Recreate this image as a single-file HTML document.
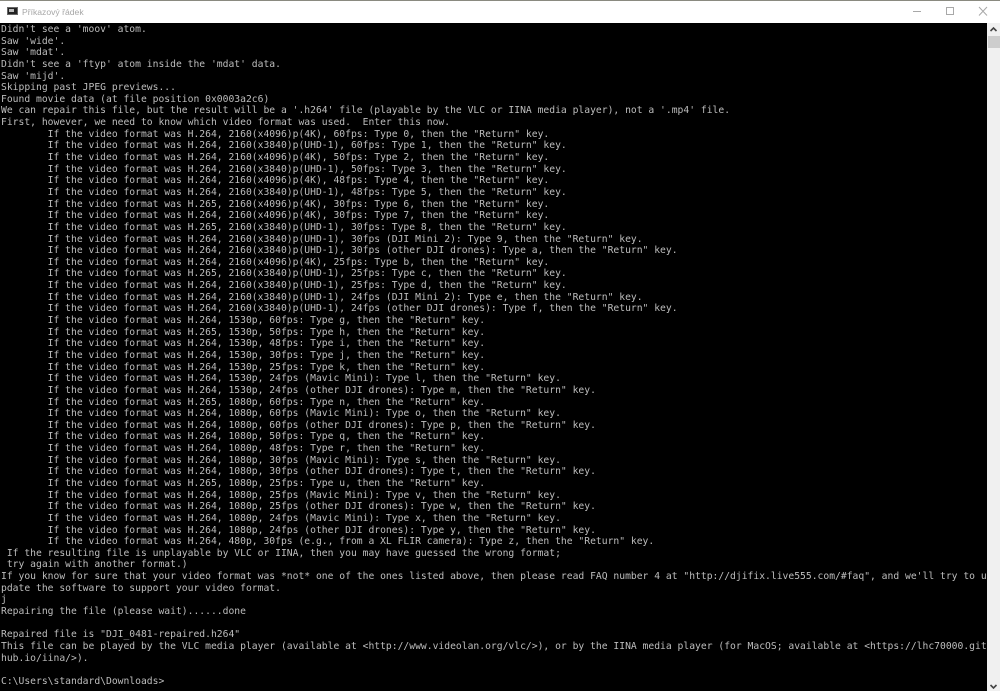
<!DOCTYPE html>
<html lang="cs"><head><meta charset="utf-8"><title>Příkazový řádek</title>
<style>
html,body{margin:0;padding:0;background:#fff}
body{width:1000px;height:691px;position:relative;overflow:hidden;font-family:"Liberation Sans",sans-serif}
#strip{position:absolute;left:0;top:0;width:1000px;height:1px;background:#8a8a80}
#bar{position:absolute;left:0;top:1px;width:1000px;height:22px;background:#fff}
#ico{position:absolute;left:7px;top:7px;width:11px;height:8px;background:#222;border:1px solid #666;box-sizing:border-box}
#ico:after{content:"";position:absolute;left:1px;top:1px;width:5px;height:3px;background:#bbb}
#ttl{position:absolute;left:22px;top:6px;font-size:8.6px;line-height:12px;color:#a6a6a6}
#con{position:absolute;left:0;top:23px;width:987px;height:668px;background:#000;overflow:hidden}
#txt{position:absolute;left:1px;top:1px;margin:0;font-family:"DejaVu Sans Mono",monospace;font-size:9.705px;line-height:11.64px;color:#bdbdbd;white-space:pre;filter:blur(.3px)}
#sb{position:absolute;left:987px;top:23px;width:13px;height:668px;background:#f0f0f0}
#th{position:absolute;left:988px;top:36px;width:12px;height:12px;background:#cdcdcd}
svg{position:absolute}
</style></head><body>
<div id="strip"></div>
<div id="bar"></div>
<div id="ico"></div>
<div id="ttl">Příkazový řádek</div>
<svg style="left:910px;top:4px" width="90" height="16" viewBox="0 0 90 16" fill="none" stroke="#a8a8a8" stroke-width="1">
<path d="M3 7.5H11"/><rect x="36.5" y="3.5" width="7" height="7"/><path d="M69 3L77 11.5M77 3L69 11.5"/>
</svg>
<div id="con"><pre id="txt">Didn't see a 'moov' atom.
Saw 'wide'.
Saw 'mdat'.
Didn't see a 'ftyp' atom inside the 'mdat' data.
Saw 'mijd'.
Skipping past JPEG previews...
Found movie data (at file position 0x0003a2c6)
We can repair this file, but the result will be a '.h264' file (playable by the VLC or IINA media player), not a '.mp4' file.
First, however, we need to know which video format was used.  Enter this now.
        If the video format was H.264, 2160(x4096)p(4K), 60fps: Type 0, then the "Return" key.
        If the video format was H.264, 2160(x3840)p(UHD-1), 60fps: Type 1, then the "Return" key.
        If the video format was H.264, 2160(x4096)p(4K), 50fps: Type 2, then the "Return" key.
        If the video format was H.264, 2160(x3840)p(UHD-1), 50fps: Type 3, then the "Return" key.
        If the video format was H.264, 2160(x4096)p(4K), 48fps: Type 4, then the "Return" key.
        If the video format was H.264, 2160(x3840)p(UHD-1), 48fps: Type 5, then the "Return" key.
        If the video format was H.265, 2160(x4096)p(4K), 30fps: Type 6, then the "Return" key.
        If the video format was H.264, 2160(x4096)p(4K), 30fps: Type 7, then the "Return" key.
        If the video format was H.265, 2160(x3840)p(UHD-1), 30fps: Type 8, then the "Return" key.
        If the video format was H.264, 2160(x3840)p(UHD-1), 30fps (DJI Mini 2): Type 9, then the "Return" key.
        If the video format was H.264, 2160(x3840)p(UHD-1), 30fps (other DJI drones): Type a, then the "Return" key.
        If the video format was H.264, 2160(x4096)p(4K), 25fps: Type b, then the "Return" key.
        If the video format was H.265, 2160(x3840)p(UHD-1), 25fps: Type c, then the "Return" key.
        If the video format was H.264, 2160(x3840)p(UHD-1), 25fps: Type d, then the "Return" key.
        If the video format was H.264, 2160(x3840)p(UHD-1), 24fps (DJI Mini 2): Type e, then the "Return" key.
        If the video format was H.264, 2160(x3840)p(UHD-1), 24fps (other DJI drones): Type f, then the "Return" key.
        If the video format was H.264, 1530p, 60fps: Type g, then the "Return" key.
        If the video format was H.265, 1530p, 50fps: Type h, then the "Return" key.
        If the video format was H.264, 1530p, 48fps: Type i, then the "Return" key.
        If the video format was H.264, 1530p, 30fps: Type j, then the "Return" key.
        If the video format was H.264, 1530p, 25fps: Type k, then the "Return" key.
        If the video format was H.264, 1530p, 24fps (Mavic Mini): Type l, then the "Return" key.
        If the video format was H.264, 1530p, 24fps (other DJI drones): Type m, then the "Return" key.
        If the video format was H.265, 1080p, 60fps: Type n, then the "Return" key.
        If the video format was H.264, 1080p, 60fps (Mavic Mini): Type o, then the "Return" key.
        If the video format was H.264, 1080p, 60fps (other DJI drones): Type p, then the "Return" key.
        If the video format was H.264, 1080p, 50fps: Type q, then the "Return" key.
        If the video format was H.264, 1080p, 48fps: Type r, then the "Return" key.
        If the video format was H.264, 1080p, 30fps (Mavic Mini): Type s, then the "Return" key.
        If the video format was H.264, 1080p, 30fps (other DJI drones): Type t, then the "Return" key.
        If the video format was H.265, 1080p, 25fps: Type u, then the "Return" key.
        If the video format was H.264, 1080p, 25fps (Mavic Mini): Type v, then the "Return" key.
        If the video format was H.264, 1080p, 25fps (other DJI drones): Type w, then the "Return" key.
        If the video format was H.264, 1080p, 24fps (Mavic Mini): Type x, then the "Return" key.
        If the video format was H.264, 1080p, 24fps (other DJI drones): Type y, then the "Return" key.
        If the video format was H.264, 480p, 30fps (e.g., from a XL FLIR camera): Type z, then the "Return" key.
 If the resulting file is unplayable by VLC or IINA, then you may have guessed the wrong format;
 try again with another format.)
If you know for sure that your video format was *not* one of the ones listed above, then please read FAQ number 4 at "http://djifix.live555.com/#faq", and we'll try to u
pdate the software to support your video format.
j
Repairing the file (please wait)......done

Repaired file is "DJI_0481-repaired.h264"
This file can be played by the VLC media player (available at &lt;http://www.videolan.org/vlc/&gt;), or by the IINA media player (for MacOS; available at &lt;https://lhc70000.git
hub.io/iina/&gt;).

C:\Users\standard\Downloads&gt;</pre></div>
<div id="sb"></div>
<div id="th"></div>
<svg style="left:987px;top:24px" width="13" height="10" viewBox="0 0 13 10" fill="none" stroke="#444" stroke-width="1.6"><path d="M3.5 7L6.5 4L9.5 7"/></svg>
<svg style="left:987px;top:682px" width="13" height="10" viewBox="0 0 13 10" fill="none" stroke="#444" stroke-width="1.6"><path d="M3.5 3L6.5 6L9.5 3"/></svg>
</body></html>
